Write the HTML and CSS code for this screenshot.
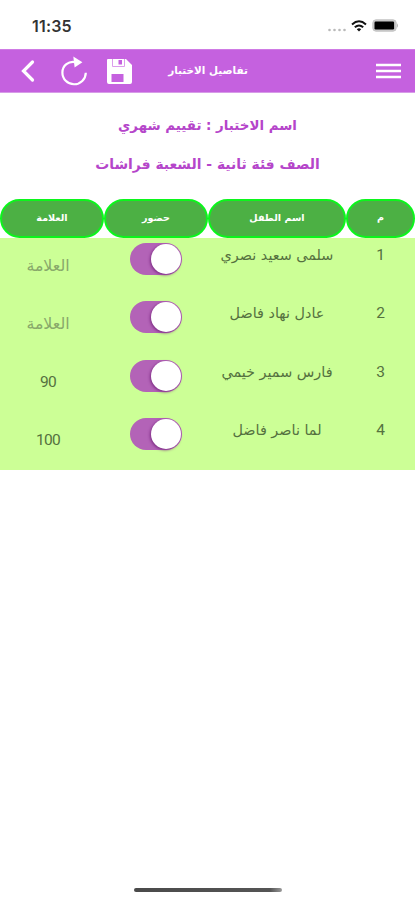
FILE: index.html
```html
<!DOCTYPE html>
<html lang="ar" dir="rtl">
<head>
<meta charset="utf-8">
<meta name="viewport" content="width=device-width, initial-scale=1">
<title>تفاصيل الاختبار</title>
<link rel="stylesheet" href="styles.css">
</head>
<body>

<div class="status" dir="ltr">
  <span class="time">11:35</span>
  <svg class="signal" width="20" height="4" viewBox="0 0 20 4" fill="#b9b9b9"><circle cx="2.5" cy="2" r="1.3"/><circle cx="7.5" cy="2" r="1.3"/><circle cx="12.5" cy="2" r="1.3"/><circle cx="17.5" cy="2" r="1.3"/></svg>
  <svg class="wifi" width="16" height="12" viewBox="0 0 16 12" fill="none" stroke="#111" stroke-width="2"><path d="M1 4.4Q8 -1.8 15 4.4"/><path d="M3.8 7.3Q8 3.7 12.2 7.3"/><path d="M5.8 9.2Q8 7.4 10.2 9.2L8 11.6Z" fill="#111" stroke="none"/></svg>
  <svg class="battery" width="27" height="13" viewBox="0 0 27 13"><rect x=".8" y=".8" width="23.4" height="11.4" rx="3.2" fill="#c9c9c9" stroke="#c4c4c4"/><rect x="2.5" y="2.6" width="19.6" height="7.8" rx="1.2" fill="#000"/><path d="M25 4.2Q27 6.5 25 8.8Z" fill="#b5b5b5"/></svg>
</div>

<header class="bar" dir="ltr">
  <svg class="back" width="16" height="24" viewBox="0 0 16 24" fill="none" stroke="#fff" stroke-width="3.2" stroke-linecap="round"><path d="M12.5 3L3.5 12L12.5 21"/></svg>
  <svg class="reload" width="28" height="30" viewBox="0 0 28 30" fill="none" stroke="#fff" stroke-width="2.2"><path d="M16 6.2C8.5 4.4 2.4 9.6 2.4 16.4A11.7 11.7 0 0 0 25.8 16.7"/><path d="M13.3 .6L22.4 6.2L14.6 11.6Z" fill="#fff" stroke="none"/></svg>
  <svg class="save" width="25" height="25" viewBox="0 0 25 25"><path fill="#fff" fill-rule="evenodd" d="M1 0H19L25 6V23Q25 25 23 25H2Q0 25 0 23V1Q0 0 1 0ZM4.5 15V23H16.5V15ZM11.5 1V5.5H15V1Z"/><path fill="none" stroke="#dc9dec" d="M5.5 0V7.5H17.5V0"/></svg>
  <h1 dir="rtl">تفاصيل الاختبار</h1>
  <svg class="menu" width="25" height="16" viewBox="0 0 25 16" stroke="#fff" stroke-width="2.4"><path d="M0 2H25M0 8H25M0 14H25"/></svg>
</header>

<div class="info">
  <p class="exam">اسم الاختبار : تقييم شهري</p>
  <p class="class">الصف فئة ثانية - الشعبة فراشات</p>
</div>

<div class="row head">
  <div>م</div>
  <div>اسم الطفل</div>
  <div>حضور</div>
  <div>العلامة</div>
</div>

<div class="list">
  <div class="row">
    <div class="num">1</div>
    <div class="name">سلمى سعيد نصري</div>
    <div class="attend"><span class="switch"></span></div>
    <div class="mark empty">العلامة</div>
  </div>
  <div class="row">
    <div class="num">2</div>
    <div class="name">عادل نهاد فاضل</div>
    <div class="attend"><span class="switch"></span></div>
    <div class="mark empty">العلامة</div>
  </div>
  <div class="row">
    <div class="num">3</div>
    <div class="name">فارس سمير خيمي</div>
    <div class="attend"><span class="switch"></span></div>
    <div class="mark">90</div>
  </div>
  <div class="row">
    <div class="num">4</div>
    <div class="name">لما ناصر فاضل</div>
    <div class="attend"><span class="switch"></span></div>
    <div class="mark">100</div>
  </div>
</div>

<div class="home"></div>

</body>
</html>
```
FILE: styles.css
```css
* {
  box-sizing: border-box;
}
body {
  margin: 0;
  height: 900px;
  display: flex;
  flex-direction: column;
  background: #fff;
  font-family: "DejaVu Sans", sans-serif;
}
.status {
  display: flex;
  align-items: center;
  height: 49px;
  padding: 2px 16px 0 32px;
}
.time {
  margin-right: auto;
  font: 600 16px Inter, sans-serif;
  letter-spacing: 0.2px;
  color: #333;
}
.signal {
  margin: 8px 4px 0 0;
}
.wifi {
  margin-right: 5px;
}
.bar {
  display: flex;
  align-items: center;
  height: 44px;
  padding: 0 14px 0 20px;
  background: #c561df;
  border-top: 1px solid #cf7be5;
  border-bottom: 1px solid #d79be8;
}
.reload {
  margin-left: 24px;
}
.save {
  margin-left: 19px;
}
h1 {
  width: 80px;
  margin: 0 0 2px 36px;
  font-size: 10.4px;
  text-align: center;
  white-space: nowrap;
  color: #fff;
}
.menu {
  margin-left: auto;
}
.info {
  height: 106px;
  padding-top: 13px;
  text-align: center;
  font-weight: bold;
  color: #b545ca;
}
.info p {
  margin: 0;
  line-height: 39px;
}
.exam {
  font-size: 13.4px;
}
.class {
  font-size: 13.9px;
}
.row {
  display: grid;
  grid-template-columns: 69px 138px 104px 104px;
  height: 58.3px;
  text-align: center;
}
.head {
  height: 39px;
}
.head div {
  border: 2px solid #0cf51c;
  border-radius: 20px;
  background: #4cb044;
  color: #fff;
  font-size: 9.6px;
  font-weight: bold;
  line-height: 33px;
}
.list {
  background: #ccff96;
  height: 232px;
  font-size: 14.4px;
  color: #55713f;
}
.name {
  line-height: 35px;
}
.num, .mark {
  font-family: Roboto, "DejaVu Sans", sans-serif;
  font-size: 15.5px;
}
.num {
  line-height: 35px;
}
.attend {
  padding-top: 5px;
}
.switch {
  display: flex;
  width: 52px;
  height: 32px;
  margin: 0 auto;
  padding: 1px;
  border-radius: 16px;
  background: #b363b7;
}
.switch::before {
  content: "";
  width: 30px;
  height: 30px;
  margin-right: 0;
  border-radius: 50%;
  background: #fff;
  box-shadow: -1px 1px 3px #7c2c84;
}
.mark {
  padding-right: 8px;
  line-height: 54px;
  letter-spacing: -0.7px;
}
.empty {
  font-family: "DejaVu Sans", sans-serif;
  font-size: 15.8px;
  line-height: 56px;
  letter-spacing: 0;
  color: #88a86a;
}
.home {
  width: 148px;
  height: 4px;
  margin: auto auto 8px;
  border-radius: 2px;
  background: linear-gradient(to right, #4a4a4a, #555 92%, #999);
}
```
